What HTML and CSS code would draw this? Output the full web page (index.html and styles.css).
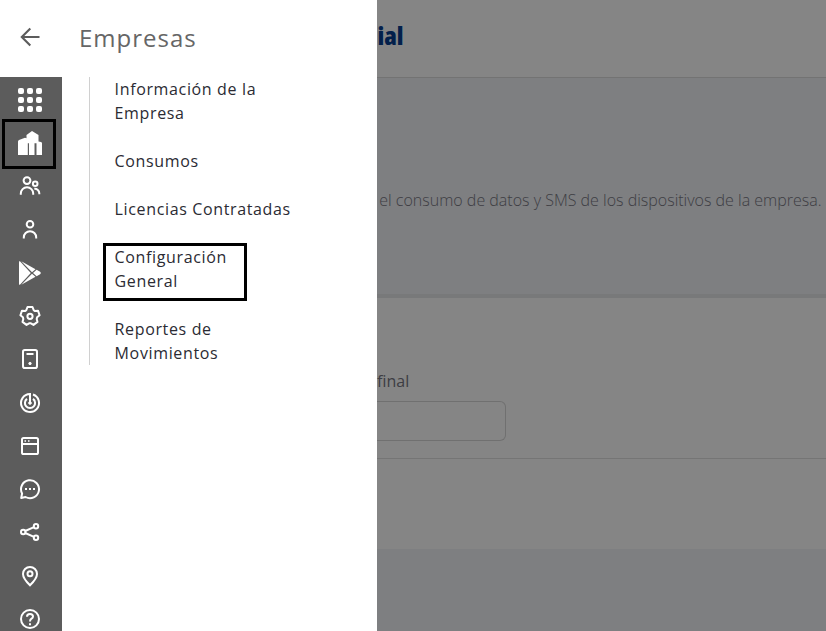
FILE: index.html
```html
<!DOCTYPE html>
<html lang="es">
<head>
<meta charset="utf-8">
<title>Empresas</title>
<link rel="stylesheet" href="styles.css">
</head>
<body>
<div class="app">
  <aside class="drawer">
    <header class="drawer-head">
      <svg class="back" width="20" height="20" viewBox="0 0 20 20"><path d="M19.5 10H2M10.3 1.5L1.8 10l8.5 8.5"/></svg>
      <h1>Empresas</h1>
    </header>
    <div class="drawer-body">
      <nav class="rail">
        <a><svg viewBox="0 0 24 24" class="solid"><rect x="0" y="0" width="6" height="6" rx="2"/><rect x="9" y="0" width="6" height="6" rx="2"/><rect x="18" y="0" width="6" height="6" rx="2"/><rect x="0" y="9" width="6" height="6" rx="2"/><rect x="9" y="9" width="6" height="6" rx="2"/><rect x="18" y="9" width="6" height="6" rx="2"/><rect x="0" y="18" width="6" height="6" rx="2"/><rect x="9" y="18" width="6" height="6" rx="2"/><rect x="18" y="18" width="6" height="6" rx="2"/></svg></a>
        <a class="marked"><svg viewBox="0 0 24 24" class="solid"><path d="M0 24V10.500Q0 9.500 1 9L7 6.800 8.500 7.200V4L14 0l6.500 4v6.500L23 11q1 .3 1 1.300V24h-5.500V12.200H16.500V24H11V12.200H9.800V24z"/></svg></a>
        <a><svg viewBox="0 0 24 24"><circle cx="9" cy="6.600" r="3.400"/><path d="M2.800 20.800v-1.300a6.200 6.200 0 0 1 12.400 0v1.300"/><circle cx="17.200" cy="9.800" r="2.300"/><path d="M16.300 14.800a4.500 4.500 0 0 1 5 4.500v1"/></svg></a>
        <a><svg viewBox="0 0 24 24"><circle cx="12" cy="6.200" r="3.300"/><path d="M5.800 20.600v-1.200a6.200 6.200 0 0 1 12.400 0v1.200"/></svg></a>
        <a><svg viewBox="0 0 24 24" class="solid"><path d="M1.700 0L12.800 12 1.700 24Q1 23.700 1 22.500v-21Q1 .4 1.700 0z"/><path d="M3.300.3L17.500 8.200 14 11.300zM3.300 23.700l14.200-7.900L14 12.700zM18.600 8.800l3.500 2q1.700 1.200 0 2.400l-3.500 2L15 12z"/></svg></a>
        <a><svg viewBox="0 0 24 24"><path class="soft" d="M9.500 3h5L15.700 6.200 17 7.100 20 6.700 21.600 11.300 19.100 13.300 18.700 15 19.500 17.900 15.500 20.900 12.900 19.300H11.100L8.500 20.900 4.500 17.900 5.300 15 4.900 13.300 2.400 11.300 4 6.700 7 7.100 8.300 6.200z"/><circle cx="12" cy="12.300" r="2.600"/></svg></a>
        <a><svg viewBox="0 0 24 24"><rect x="5" y="3" width="14" height="18" rx="1.800"/><path d="M8.500 7h7"/><circle cx="12" cy="16.500" r="1.200" class="dot"/></svg></a>
        <a><svg viewBox="0 0 24 24"><path d="M15 3.500A9 9 0 1 1 12 3v9"/><path d="M9 7.900a5.100 5.100 0 1 0 6 0"/><circle cx="12" cy="12" r="1.300" class="dot"/></svg></a>
        <a><svg viewBox="0 0 24 24"><rect x="4" y="4" width="16" height="16" rx="1.600"/><path d="M4 10h16"/><path class="thin" d="M6.500 7H8M10 7h1.500"/></svg></a>
        <a><svg viewBox="0 0 24 24"><path class="soft" d="M3.200 21l.9-4.500A9 9 0 1 1 7.500 20z"/><path d="M7 12h2M11 12h2M15 12h2"/></svg></a>
        <a><svg viewBox="0 0 24 24"><circle cx="5.200" cy="12" r="2.200"/><circle cx="18" cy="6.200" r="2.200"/><circle cx="18" cy="17.800" r="2.200"/><path d="M7.200 11L16 7.100M7.200 13l8.800 3.900"/></svg></a>
        <a><svg viewBox="0 0 24 24"><path d="M12 21.300Q5 14.500 5 10a7 7 0 0 1 14 0q0 4.500-7 11.300z"/><circle cx="12" cy="9.800" r="2.500"/></svg></a>
        <a><svg viewBox="0 0 24 24"><circle cx="12" cy="12" r="9"/><path d="M9 9.700q0-2.700 3-2.700t3 2.500q0 1.200-1.500 2.200T12 14.500M12 16.300v1.900"/></svg></a>
      </nav>
      <ul class="menu">
        <li>Información de la Empresa</li>
        <li>Consumos</li>
        <li>Licencias Contratadas</li>
        <li class="marked">Configuración General</li>
        <li>Reportes de Movimientos</li>
      </ul>
    </div>
  </aside>
  <main class="page">
    <header class="top"><span>ial</span></header>
    <section class="intro"><p>el consumo de datos y SMS de los dispositivos de la empresa.</p></section>
    <section class="form">
      <label>final</label>
      <div class="field"></div>
    </section>
    <section class="foot"></section>
  </main>
</div>
</body>
</html>
```
FILE: styles.css
```css
*, *::before, *::after { box-sizing: border-box; }
body { margin: 0; font-family: "Open Sans", sans-serif; font-size: 16px; overflow: hidden; }
.app { display: flex; width: 826px; height: 631px; overflow: hidden; background: #7e7f81; }
.drawer { width: 377px; flex: none; background: #fff; }
.drawer-head { height: 77px; display: flex; align-items: center; padding: 0 0 2px 20px; }
.back { fill: none; stroke: #5c5c5c; stroke-width: 2.1; margin-bottom: 2px; }
h1 { margin: 0 0 0 39px; font-size: 24px; font-weight: 400; letter-spacing: 1px; color: #666; }
.drawer-body { display: flex; align-items: flex-start; }
.rail { width: 62px; height: 554px; padding: 1.2px 2px 0 0; background: #5c5c5c; overflow: hidden; }
.rail a { position: relative; display: flex; height: 43.25px; align-items: center; justify-content: center; }
.rail svg { width: 24px; height: 24px; fill: none; stroke: #fff; stroke-width: 2; }
.rail .solid { fill: #fff; stroke: none; }
.rail .dot { fill: #fff; stroke-width: 1; }
.rail .thin { stroke-width: 1.5; }
.rail .soft { stroke-linejoin: round; }
.rail .marked::after { content: ""; position: absolute; left: 2px; top: -2.45px; width: 54px; height: 50px; border: 3px solid #000; }
.menu { list-style: none; width: 215px; margin: 0 0 0 27px; padding: 0 0 0 24.6px; border-left: 1px solid #d0d0d0; display: flex; flex-direction: column; gap: 24px; color: #2b2b33; line-height: 24px; letter-spacing: .64px; }
.menu li { position: relative; max-width: 180px; }
.menu .marked { width: 130px; }
.menu .marked::after { content: ""; position: absolute; left: -11.6px; top: -2px; width: 144px; height: 58px; border: 3px solid #000; }
.page { flex: 1; min-width: 0; white-space: nowrap; }
.top { height: 78px; background: #858585; border-bottom: 1px solid #737373; font-size: 25.5px; font-weight: 800; font-stretch: 87%; line-height: 34px; letter-spacing: 0; color: #03204b; padding: 18px 0 0 .5px; }
.intro { height: 220px; border-bottom: 4px solid #78797a; padding: 110px 0 0 2.3px; }
.intro p { margin: 0; font-weight: 300; line-height: 24px; color: #3d3d43; }
.form { height: 161px; background: #858585; border-bottom: 1px solid #757575; padding-top: 71px; }
.form label { display: block; height: 32px; line-height: 24px; color: #3d3d43; }
.field { width: 129px; height: 40px; border: 1px solid #707070; border-left: 0; border-radius: 0 6px 6px 0; }
.foot { height: 90px; background: #858585; }
```
